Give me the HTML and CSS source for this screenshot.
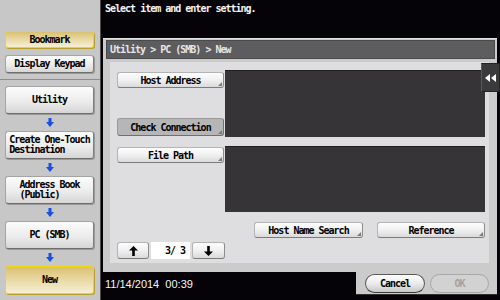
FILE: index.html
```html
<!DOCTYPE html>
<html>
<head>
<meta charset="utf-8">
<link rel="stylesheet" href="styles.css">
</head>
<body>
<aside class="side">
  <div class="side-top">
    <div class="sbtn yellow short">Bookmark</div>
    <div class="sbtn short keypad">Display Keypad</div>
  </div>
  <div class="side-path">
    <div class="sbtn tall">Utility</div>
    <div class="down"><svg width="8" height="9" viewBox="0 0 8 9"><path d="M2.5 0h3v4H8L4 9 0 4h2.5z" fill="#1a4fe6"/></svg></div>
    <div class="sbtn tall"><span class="two">Create One-Touch<br>Destination</span></div>
    <div class="down"><svg width="8" height="9" viewBox="0 0 8 9"><path d="M2.5 0h3v4H8L4 9 0 4h2.5z" fill="#1a4fe6"/></svg></div>
    <div class="sbtn tall"><span class="two">Address Book<br>(Public)</span></div>
    <div class="down"><svg width="8" height="9" viewBox="0 0 8 9"><path d="M2.5 0h3v4H8L4 9 0 4h2.5z" fill="#1a4fe6"/></svg></div>
    <div class="sbtn tall">PC (SMB)</div>
    <div class="down"><svg width="8" height="9" viewBox="0 0 8 9"><path d="M2.5 0h3v4H8L4 9 0 4h2.5z" fill="#1a4fe6"/></svg></div>
    <div class="sbtn tall yellow">New</div>
  </div>
</aside>
<main class="main">
  <div class="prompt">Select item and enter setting.</div>
  <section class="frame">
    <div class="crumb">Utility &gt; PC (SMB) &gt; New</div>
    <div class="body">
      <div class="inner">
        <div class="row row1">
          <div class="col">
            <div class="btn host">Host Address</div>
            <div class="btn pressed">Check Connection</div>
          </div>
          <div class="field"></div>
        </div>
        <div class="row row2">
          <div class="col">
            <div class="btn path">File Path</div>
          </div>
          <div class="field"></div>
        </div>
        <div class="tools">
          <div class="btn hns">Host Name Search</div>
          <div class="btn ref">Reference</div>
        </div>
        <div class="pager">
          <div class="btn arrow up"><svg width="9" height="10" viewBox="0 0 9 10"><path d="M4.5 0L9 4.5H5.8V10H3.2V4.5H0z" fill="#000"/></svg></div>
          <div class="page">3/ 3</div>
          <div class="btn arrow dn"><svg width="9" height="10" viewBox="0 0 9 10"><path d="M3.2 0h2.6v5.5H9L4.5 10 0 5.5h3.2z" fill="#000"/></svg></div>
        </div>
      </div>
      <div class="tab"><svg width="11" height="8" viewBox="0 0 11 8"><path d="M0 4L5 0V8z M6 4L11 0V8z" fill="#fff"/></svg></div>
    </div>
  </section>
  <footer class="foot">
    <div class="date">11/14/2014&nbsp;&nbsp;00:39</div>
    <div class="actions">
      <div class="pill">Cancel</div>
      <div class="pill off">OK</div>
    </div>
  </footer>
</main>
</body>
</html>
```

FILE: styles.css
```css
html, body {
  margin: 0;
  padding: 0;
}
body {
  width: 500px;
  height: 300px;
  overflow: hidden;
  background: #050307;
  display: flex;
  font-family: "DejaVu Sans Mono", monospace;
  font-size: 10px;
  font-weight: bold;
  letter-spacing: -1px;
  color: #000;
}

/* sidebar */
.side {
  width: 100px;
  height: 300px;
  background: #c7c7c7;
  border-right: 1px solid #4a4a4a;
  display: flex;
  flex-direction: column;
}
.side-top {
  box-sizing: border-box;
  height: 80px;
  padding: 31px 0 0 5px;
  border-bottom: 1px solid #8e8e8e;
  display: flex;
  flex-direction: column;
  gap: 7px;
}
.side-path {
  padding: 6px 0 0 5px;
  display: flex;
  flex-direction: column;
}
.sbtn {
  box-sizing: border-box;
  width: 89px;
  display: flex;
  align-items: center;
  justify-content: center;
  border: 1px solid #a4a4a4;
  border-right-color: #7e7e7e;
  border-bottom-color: #6e6e6e;
  border-radius: 3px;
  background: linear-gradient(#fcfcfc, #ececec 55%, #d6d6d6);
  box-shadow: 1px 1px 0 #9a9a9a;
  line-height: 10px;
}
.sbtn.short { height: 17px; }
.sbtn.keypad { height: 18px; }
.sbtn.tall { height: 28px; }
.sbtn.yellow {
  border: 1px solid #f2d60c;
  background: linear-gradient(#d9c172, #e9d9a4 50%, #f6efd6);
  box-shadow: 1px 1px 0 #b8a030;
}
.two {
  display: inline-block;
  text-align: left;
}
.down {
  height: 17px;
  width: 89px;
  display: flex;
  align-items: center;
  justify-content: center;
}

/* main */
.main {
  width: 399px;
  display: flex;
  flex-direction: column;
}
.prompt {
  height: 38px;
  box-sizing: border-box;
  padding: 3px 0 0 4px;
  line-height: 12px;
  color: #f4f4f4;
}
.frame {
  box-sizing: border-box;
  margin-left: 2px;
  width: 394px;
  height: 234px;
  background: #cbcbcb;
  border-top: 1px solid #e2e2e2;
  padding: 1px 2px 0 3px;
  display: flex;
  flex-direction: column;
}
.crumb {
  height: 19px;
  box-sizing: border-box;
  background: #5d5c5e;
  border: 1px solid #4a4a4a;
  color: #e6e6e6;
  padding: 0 0 0 3px;
  line-height: 17px;
}
.body {
  position: relative;
  height: 213px;
  box-sizing: border-box;
  padding: 3px 6px 9px 4px;
}
.inner {
  height: 201px;
  box-sizing: border-box;
  background: #dedddf;
  padding: 8px 4px 0 7px;
  display: flex;
  flex-direction: column;
}
.row {
  display: flex;
}
.row1 { height: 67px; }
.row2 { height: 66px; margin-top: 9px; }
.col {
  width: 108px;
  display: flex;
  flex-direction: column;
}
.field {
  flex: 1;
  background: #363437;
  border-top: 1px solid #1e1d1f;
}
.btn {
  position: relative;
  box-sizing: border-box;
  display: flex;
  align-items: center;
  justify-content: center;
  border: 1px solid #b4b4b4;
  border-right-color: #8c8c8c;
  border-bottom-color: #7c7c7c;
  border-radius: 3px;
  background: linear-gradient(#fdfdfd, #f0f0f0 50%, #dadada);
}
.btn::after {
  content: "";
  position: absolute;
  right: 1px;
  bottom: 1px;
  width: 0;
  height: 0;
  border-left: 4px solid transparent;
  border-bottom: 4px solid #7a7a7a;
}
.btn.arrow::after { display: none; }
.host { width: 107px; height: 16px; margin-top: 2px; }
.pressed {
  width: 107px;
  height: 18px;
  margin-top: 30px;
  background: #b6b6b7;
  border-color: #9a9a9a;
  border-bottom-color: #707070;
  border-right-color: #707070;
}
.path { width: 107px; height: 16px; margin-top: 1px; }
.tools {
  display: flex;
  height: 16px;
  margin-top: 10px;
}
.hns { width: 109px; margin-left: 137px; }
.ref { width: 108px; margin-left: 14px; }
.pager {
  display: flex;
  height: 17px;
  margin-top: 4px;
  gap: 2px;
}
.arrow.up { width: 32px; }
.arrow.dn { width: 33px; }
.page {
  width: 39px;
  background: #fff;
  box-sizing: border-box;
  padding: 0 5px 0 0;
  text-align: right;
  line-height: 17px;
}
.tab {
  position: absolute;
  top: 4px;
  right: -5px;
  width: 19px;
  height: 29px;
  box-sizing: border-box;
  background: #3a393b;
  border: 1px solid #222;
  border-left-color: #5a5a5a;
  display: flex;
  align-items: center;
  justify-content: center;
}

/* footer */
.foot {
  height: 28px;
  display: flex;
}
.date {
  flex: 1;
  padding: 6px 0 0 4px;
  font-family: "Liberation Sans", Arial, sans-serif;
  font-weight: normal;
  letter-spacing: 0;
  font-size: 11px;
  color: #f6f6f6;
  line-height: 12px;
}
.actions {
  width: 141px;
  height: 23px;
  margin-right: 3px;
  box-sizing: border-box;
  background: #cbcbcb;
  border-bottom: 1px solid #303030;
  padding: 2px 0 0 9px;
  display: flex;
  gap: 5px;
}
.pill {
  box-sizing: border-box;
  width: 60px;
  height: 19px;
  border-radius: 10px;
  border: 1px solid #5a5a5a;
  border-bottom-color: #3a3a3a;
  background: linear-gradient(#fdfdfd, #ebebeb 50%, #c8c8c8);
  display: flex;
  align-items: center;
  justify-content: center;
}
.pill.off {
  width: 59px;
  border-color: #a8a8a8;
  background: #d2d2d2;
  color: #a2a2a2;
}
```
